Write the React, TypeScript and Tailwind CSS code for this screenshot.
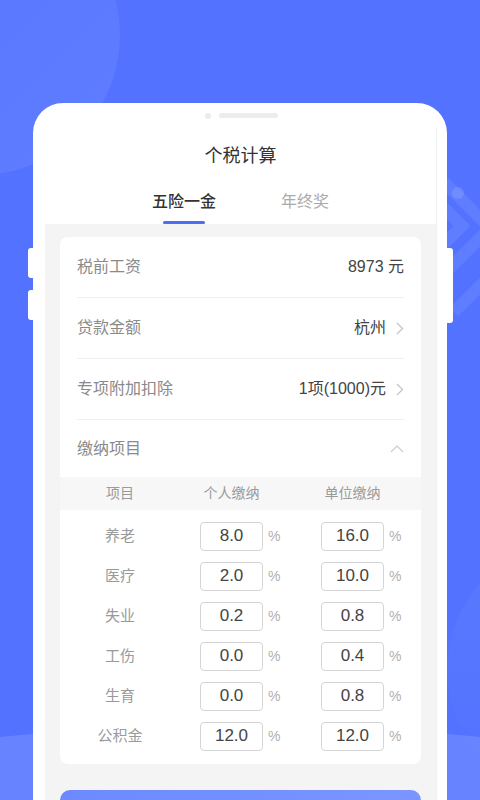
import React from 'react';

const rates = [
  { name: '养老', personal: '8.0', company: '16.0' },
  { name: '医疗', personal: '2.0', company: '10.0' },
  { name: '失业', personal: '0.2', company: '0.8' },
  { name: '工伤', personal: '0.0', company: '0.4' },
  { name: '生育', personal: '0.0', company: '0.8' },
  { name: '公积金', personal: '12.0', company: '12.0' },
];

function Chevron() {
  return (
    <svg width="8" height="13" viewBox="0 0 8 13" fill="none" className="ml-[10px]">
      <polyline points="1,1 6.5,6.5 1,12" stroke="#c4c4c4" strokeWidth="1.3" />
    </svg>
  );
}

function Row({ label, children, last }: { label: string; children: React.ReactNode; last?: boolean }) {
  return (
    <div className={`flex items-center justify-between h-[61px] ${last ? '' : 'border-b border-[#f0f0f0]'}`}>
      <span className="text-[16px] text-[#8a8a8a]">{label}</span>
      <div className="flex items-center text-[16px] text-[#444]">{children}</div>
    </div>
  );
}

function RateBox({ value }: { value: string }) {
  return (
    <>
      <div className="w-[63px] h-[29px] border border-[#d4d4d4] rounded-[4px] flex items-center justify-center text-[17px] text-[#444]">
        {value}
      </div>
      <span className="w-[13px] ml-[5px] text-[14px] text-[#b0b0b0]">%</span>
    </>
  );
}

export default function App() {
  return (
    <div className="relative w-[480px] h-[800px] overflow-hidden bg-[#5272ff] font-['Liberation_Sans','Noto_Sans_CJK_SC',sans-serif]">
      {/* 背景装饰 */}
      <div className="absolute left-[-160px] top-[-105px] w-[280px] h-[280px] rounded-full bg-gradient-to-br from-white/[0.02] to-white/[0.08]" />
      <div className="absolute left-[447px] top-[540px] w-[260px] h-[260px] rounded-full bg-gradient-to-b from-white/[0.05] to-white/0" />
      <div className="absolute left-[-460px] top-[725px] w-[1400px] h-[400px] rounded-[50%] bg-white/[0.12]" />
      <svg className="absolute left-[440px] top-[170px]" width="40" height="170" viewBox="0 0 40 170" fill="none">
        <circle cx="18" cy="23" r="6" fill="white" fillOpacity="0.12" />
        <path d="M4 12 L44 52" stroke="white" strokeOpacity="0.08" strokeWidth="12" />
        <path d="M4 38 L22 56 L4 74" stroke="white" strokeOpacity="0.08" strokeWidth="12" />
        <path d="M44 64 L8 100" stroke="white" strokeOpacity="0.08" strokeWidth="12" />
        <path d="M44 112 L14 142" stroke="white" strokeOpacity="0.08" strokeWidth="12" />
      </svg>

      <div className="relative pt-[103px] px-[33px]">
        {/* 手机外壳 */}
        <div className="relative bg-white rounded-t-[30px] h-[697px] pl-[12px] pr-[10px]">
          <div className="absolute left-[-5px] top-[145px] w-[6px] h-[30px] bg-white rounded-l-[3px]" />
          <div className="absolute left-[-5px] top-[187px] w-[6px] h-[30px] bg-white rounded-l-[3px]" />
          <div className="absolute right-[-6px] top-[145px] w-[7px] h-[75px] bg-white rounded-r-[3px]" />

          <div className="h-[25px] pt-[10px] flex justify-center items-start gap-[8px]">
            <div className="w-[6px] h-[6px] rounded-full bg-[#ececec]" />
            <div className="w-[59px] h-[5px] rounded-full bg-[#ececec]" />
          </div>

          <div className="h-[672px] border-r border-[#eef2f2] flex flex-col">
            <div className="h-[56px] shrink-0 flex items-center justify-center text-[18px] text-[#333]">个税计算</div>

            <div className="h-[40px] shrink-0 flex justify-center gap-[65px]">
              <div className="flex flex-col items-center pt-[6px]">
                <span className="text-[16px] leading-[24px] font-medium text-[#333]">五险一金</span>
                <div className="mt-[7px] w-[42px] h-[3px] rounded-full bg-[#4b6ef5]" />
              </div>
              <div className="pt-[6px]">
                <span className="text-[16px] leading-[24px] text-[#aaa]">年终奖</span>
              </div>
            </div>

            <div className="flex-1 min-h-0 overflow-hidden bg-[#f4f4f4] px-[15px] pt-[13px]">
              <div className="bg-white rounded-[8px] pb-[8px]">
                <div className="px-[17px]">
                  <Row label="税前工资">8973 元</Row>
                  <Row label="贷款金额">
                    杭州
                    <Chevron />
                  </Row>
                  <Row label="专项附加扣除">
                    1项(1000)元
                    <Chevron />
                  </Row>
                  <div className="flex items-center justify-between h-[57px]">
                    <span className="text-[16px] text-[#8a8a8a]">缴纳项目</span>
                    <svg width="14" height="8" viewBox="0 0 14 8" fill="none">
                      <polyline points="1,7 7,1 13,7" stroke="#cfcfcf" strokeWidth="1.3" />
                    </svg>
                  </div>
                </div>

                <div className="h-[33px] bg-[#f7f7f7] flex items-center text-[14px] text-[#9a9a9a]">
                  <div className="w-[120px] text-center">项目</div>
                  <div className="ml-[20px] w-[63px] flex justify-center whitespace-nowrap">个人缴纳</div>
                  <div className="ml-[58px] w-[63px] flex justify-center whitespace-nowrap">单位缴纳</div>
                </div>

                <div className="pt-[6px]">
                  {rates.map((r) => (
                    <div key={r.name} className="h-[40px] flex items-center">
                      <div className="w-[120px] text-center text-[15px] text-[#9a9a9a]">{r.name}</div>
                      <div className="ml-[20px] flex items-center">
                        <RateBox value={r.personal} />
                      </div>
                      <div className="ml-[40px] flex items-center">
                        <RateBox value={r.company} />
                      </div>
                    </div>
                  ))}
                </div>
              </div>

              <div className="mt-[26px] h-[40px] rounded-t-[10px] bg-gradient-to-r from-[#6c89ff] to-[#7b96ff]" />
            </div>
          </div>
        </div>
      </div>
    </div>
  );
}
